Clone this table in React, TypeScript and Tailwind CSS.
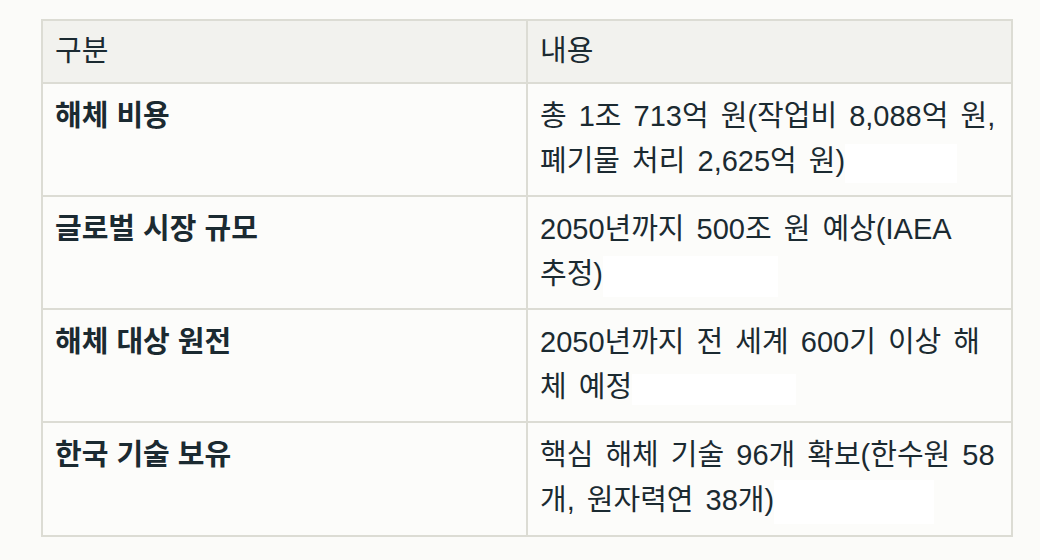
const rows = [
  { label: "해체 비용", lines: ["총 1조 713억 원(작업비 8,088억 원,", "폐기물 처리 2,625억 원)"], blank: "w-[112px] h-[39px]" },
  { label: "글로벌 시장 규모", lines: ["2050년까지 500조 원 예상(IAEA", "추정)"], blank: "w-[175px] h-[41px]" },
  { label: "해체 대상 원전", lines: ["2050년까지 전 세계 600기 이상 해", "체 예정"], blank: "w-[164px] h-[31px]" },
  { label: "한국 기술 보유", lines: ["핵심 해체 기술 96개 확보(한수원 58", "개, 원자력연 38개)"], blank: "w-[160px] h-[44px]" },
]

export default function App() {
  return (
    <div className="min-h-screen w-[1040px] bg-[#fbfbf9] pt-[19px] pl-[41px] text-[#1b2a31] font-['Liberation_Sans','Noto_Sans_CJK_KR',sans-serif]">
      <table className="w-[972px] border-collapse table-fixed text-[29px] leading-[45px]">
        <colgroup>
          <col className="w-[485px]" />
          <col />
        </colgroup>
        <thead>
          <tr className="bg-[#f2f2ee]">
            <th className="border-2 border-[#dcdcd4] px-3 py-2 text-left font-normal">구분</th>
            <th className="border-2 border-[#dcdcd4] px-3 py-2 text-left font-normal">내용</th>
          </tr>
        </thead>
        <tbody>
          {rows.map((r) => (
            <tr key={r.label} className="bg-[#fcfcfa]">
              <td className="border-2 border-[#dcdcd4] px-3 pt-[10px] pb-[11px] align-top font-semibold">
                {r.label}
              </td>
              <td className="border-2 border-[#dcdcd4] px-3 pt-[10px] pb-[11px] align-top whitespace-nowrap [word-spacing:4px]">
                {r.lines[0]}
                <br />
                {r.lines[1]}
                <span aria-hidden className={`inline-block align-middle bg-white ${r.blank}`} />
              </td>
            </tr>
          ))}
        </tbody>
      </table>
    </div>
  )
}
